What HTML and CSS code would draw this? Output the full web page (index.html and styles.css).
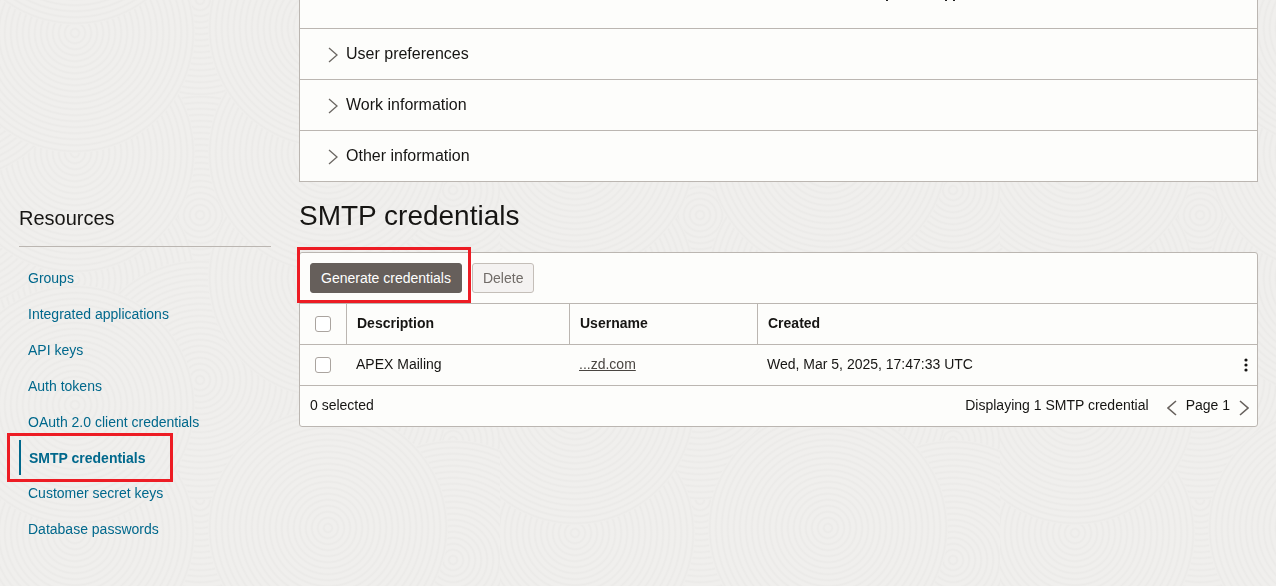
FILE: index.html
```html
<!DOCTYPE html>
<html lang="en">
<head>
<meta charset="utf-8">
<title>SMTP credentials</title>
<link rel="stylesheet" href="styles.css">
</head>
<body>
<svg class="backdrop" aria-hidden="true">
  <defs>
    <radialGradient id="rings" r="0.025" spreadMethod="repeat">
      <stop offset="0" stop-color="#f0efed"/>
      <stop offset="0.4" stop-color="#f0efed"/>
      <stop offset="0.7" stop-color="#ebeae8"/>
      <stop offset="1" stop-color="#f0efed"/>
    </radialGradient>
    <pattern id="swirls" width="500" height="500" patternUnits="userSpaceOnUse">
      <rect width="500" height="500" fill="#f0efed"/>
      <g fill="url(#rings)">
        <circle cx="200" cy="500" r="120"/><circle cx="200" cy="0" r="120"/>
        <circle cx="453" cy="441" r="120"/><circle cx="-47" cy="441" r="120"/>
        <circle cx="328" cy="403" r="120"/>
        <circle cx="453" cy="310" r="120"/><circle cx="-47" cy="310" r="120"/>
        <circle cx="200" cy="215" r="120"/>
        <circle cx="75" cy="280" r="120"/>
        <circle cx="200" cy="380" r="120"/>
        <circle cx="328" cy="278" r="120"/>
        <circle cx="453" cy="190" r="120"/><circle cx="-47" cy="190" r="120"/>
        <circle cx="328" cy="153" r="120"/>
        <circle cx="75" cy="153" r="120"/>
        <circle cx="453" cy="60" r="120"/><circle cx="-47" cy="60" r="120"/>
        <circle cx="453" cy="560" r="120"/><circle cx="-47" cy="560" r="120"/>
        <circle cx="328" cy="28" r="120"/><circle cx="328" cy="528" r="120"/>
        <circle cx="75" cy="33" r="120"/><circle cx="75" cy="533" r="120"/>
        <circle cx="75" cy="-95" r="120"/><circle cx="75" cy="405" r="120"/>
      </g>
    </pattern>
  </defs>
  <rect width="100%" height="100%" fill="url(#swirls)"/>
</svg>
<div class="page">
  <nav class="sidebar" aria-labelledby="resources">
    <h2 id="resources" class="sidebar-title">Resources</h2>
    <ul class="links">
      <li class="item"><a href="#groups">Groups</a></li>
      <li class="item"><a href="#apps">Integrated applications</a></li>
      <li class="item"><a href="#api">API keys</a></li>
      <li class="item"><a href="#tokens">Auth tokens</a></li>
      <li class="item"><a href="#oauth">OAuth 2.0 client credentials</a></li>
      <li class="item active"><a href="#smtp" aria-current="page">SMTP credentials</a></li>
      <li class="item"><a href="#secret">Customer secret keys</a></li>
      <li class="item"><a href="#database">Database passwords</a></li>
    </ul>
  </nav>
  <main class="main">
    <section class="panel">
      <div class="panel-head">
        <svg class="tails" width="70" height="1" aria-hidden="true"><path d="M1 .5h2M60 .5h2M68 .5h2" stroke="#222"/></svg>
      </div>
      <button class="section" type="button"><svg class="chevron" viewBox="0 0 10 16"><path d="M1 1l8 7-8 7"/></svg>User preferences</button>
      <button class="section" type="button"><svg class="chevron" viewBox="0 0 10 16"><path d="M1 1l8 7-8 7"/></svg>Work information</button>
      <button class="section" type="button"><svg class="chevron" viewBox="0 0 10 16"><path d="M1 1l8 7-8 7"/></svg>Other information</button>
    </section>
    <h1 class="title">SMTP credentials</h1>
    <section class="card">
      <div class="toolbar">
        <span class="marked"><button class="btn primary" type="button">Generate credentials</button></span>
        <button class="btn" type="button" disabled>Delete</button>
      </div>
      <table class="table">
        <colgroup><col class="col-check"><col class="col-desc"><col class="col-user"><col></colgroup>
        <thead>
          <tr>
            <th class="check"><input type="checkbox" aria-label="Select all"></th>
            <th>Description</th>
            <th>Username</th>
            <th>Created</th>
          </tr>
        </thead>
        <tbody>
          <tr>
            <td class="check"><input type="checkbox" aria-label="Select APEX Mailing"></td>
            <td>APEX Mailing</td>
            <td><a class="user" href="#user">...zd.com</a></td>
            <td>
              <div class="created">Wed, Mar 5, 2025, 17:47:33 UTC
                <button class="icon" type="button" aria-label="Actions"><svg width="4" height="14" viewBox="0 0 4 14" fill="#161513"><circle cx="2" cy="2" r="1.6"/><circle cx="2" cy="7" r="1.6"/><circle cx="2" cy="12" r="1.6"/></svg></button>
              </div>
            </td>
          </tr>
        </tbody>
      </table>
      <div class="footer">
        <span>0 selected</span>
        <span class="count">Displaying 1 SMTP credential</span>
        <button class="icon page-arrow" type="button" aria-label="Previous page"><svg class="arrow" viewBox="0 0 10 16"><path d="M9 1L1 8l8 7"/></svg></button>
        <span>Page 1</span>
        <button class="icon page-arrow" type="button" aria-label="Next page"><svg class="arrow" viewBox="0 0 10 16"><path d="M1 1l8 7-8 7"/></svg></button>
      </div>
    </section>
  </main>
</div>
</body>
</html>
```
FILE: styles.css
```css
*, *::after { box-sizing: border-box; }

body {
  margin: 0;
  background: #f0efed;
  color: #161513;
  font: 14px/20px "Liberation Sans", Arial, sans-serif;
}

button { font: inherit; color: inherit; cursor: pointer; }

.backdrop {
  position: fixed;
  inset: 0;
  width: 100%;
  height: 100%;
  z-index: -1;
}

.page {
  display: flex;
  gap: 28px;
  padding: 0 18px 0 19px;
}

.sidebar { flex: 0 0 252px; padding-top: 204px; }

.sidebar-title {
  margin: 0;
  padding-bottom: 14px;
  border-bottom: 1px solid #bbb6b1;
  font-size: 20px;
  font-weight: 400;
  line-height: 28px;
}

.links { margin: 13px 0 0; padding: 0; list-style: none; }

.item {
  display: flex;
  align-items: center;
  height: 36px;
  padding-left: 9px;
}

.item a { color: #00688c; text-decoration: none; }

.active {
  position: relative;
  height: 35px;
  padding-left: 8px;
  border-left: 2px solid #00688c;
  font-weight: 700;
}

.active::after {
  content: "";
  position: absolute;
  top: -7px;
  left: -14px;
  width: 166px;
  height: 49px;
  border: 3px solid #ed1c24;
  pointer-events: none;
}

.main { flex: 1; min-width: 0; }

.panel {
  background: #fdfdfb;
  border: 1px solid #bbb6b1;
  border-top: 0;
}

.panel-head { height: 28px; padding-left: 585px; }
.tails { display: block; }

.section {
  display: flex;
  align-items: center;
  gap: 8px;
  width: 100%;
  height: 51px;
  padding: 0 28px;
  background: none;
  border: 0;
  border-top: 1px solid #bbb6b1;
  font-size: 16px;
}

.chevron {
  width: 10px;
  height: 16px;
  margin-top: 2px;
  fill: none;
  stroke: #6b6763;
  stroke-width: 1.3;
}

.title {
  margin: 16px 0 18px;
  font-size: 28px;
  font-weight: 400;
  line-height: 36px;
}

.card {
  background: #fdfdfb;
  border: 1px solid #bbb6b1;
  border-radius: 3px;
}

.toolbar { display: flex; gap: 10px; padding: 10px; }

.marked { position: relative; display: flex; }

.marked::after {
  content: "";
  position: absolute;
  inset: -16px -9px -10px -13px;
  border: 3px solid #ed1c24;
  pointer-events: none;
}

.btn {
  height: 30px;
  padding: 0 10px;
  border: 1px solid #c4beb8;
  border-radius: 3px;
  background: #f4f2f1;
}

.btn:disabled { color: #706b67; cursor: default; }
.primary { background: #665f5b; border-color: #665f5b; color: #fff; }

.table {
  width: 100%;
  table-layout: fixed;
  border-spacing: 0;
  text-align: left;
}

.col-check { width: 46px; }
.col-desc { width: 223px; }
.col-user { width: 188px; }

.table th,
.table td {
  height: 41px;
  padding: 0 10px 2px;
  border-top: 1px solid #bbb6b1;
}

.table th + th { border-left: 1px solid #bbb6b1; }

.table .check { padding: 0 0 0 15px; }

.check input {
  appearance: none;
  display: block;
  width: 16px;
  height: 16px;
  margin: 0;
  border: 1px solid #aaa49f;
  border-radius: 3px;
  background: #fff;
}

.user { color: #4a4642; }

.created { display: flex; justify-content: space-between; align-items: center; }

.icon {
  display: flex;
  padding: 0;
  border: 0;
  background: none;
}

.created .icon { margin-right: -1px; padding-top: 2px; }

.footer {
  display: flex;
  align-items: center;
  gap: 9px;
  height: 41px;
  padding: 0 8px 2px 10px;
  border-top: 1px solid #bbb6b1;
}

.count { margin-left: auto; margin-right: 9px; }
.page-arrow { padding-top: 5px; }

.arrow {
  width: 10px;
  height: 16px;
  fill: none;
  stroke: #67615d;
  stroke-width: 1.6;
}
```
